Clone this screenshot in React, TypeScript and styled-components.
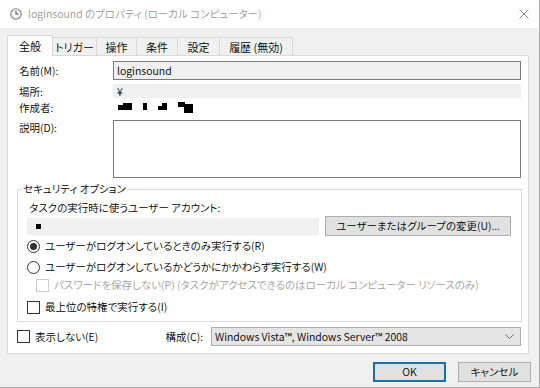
import styled, { createGlobalStyle } from 'styled-components'

const GlobalStyle = createGlobalStyle`
  html, body {
    margin: 0;
    padding: 0;
    background: #f0f0f0;
  }
  body {
    font-family: "Noto Sans CJK JP", "Noto Sans", sans-serif;
    font-size: 10.5px;
    font-weight: 350;
    color: #000;
    font-feature-settings: "palt";
  }
  * {
    box-sizing: border-box;
  }
`

const Window = styled.div`
  width: 540px;
  height: 388px;
  background: #f0f0f0;
  border-right: 1px solid #aaaaaa;
  border-bottom: 1px solid #aaaaaa;
  display: flex;
  flex-direction: column;
  overflow: hidden;
`

const TitleBar = styled.div`
  height: 28px;
  flex: none;
  background: #fff;
  display: flex;
  align-items: center;
  padding: 0 10px 0 10px;
`

const TitleText = styled.span`
  flex: 1;
  margin-left: 6px;
  color: #999;
  font-size: 10.5px;
  line-height: 16px;
  white-space: nowrap;
`

const Body = styled.div`
  flex: 1;
  display: flex;
  flex-direction: column;
  padding: 7px 8px 0 7px;
`

const TabStrip = styled.div`
  display: flex;
  align-items: flex-end;
  height: 20px;
  position: relative;
  z-index: 1;
`

const Tab = styled.div<{ $active?: boolean; $w: number }>`
  width: ${p => p.$w}px;
  height: ${p => (p.$active ? 21 : 18)}px;
  margin-bottom: ${p => (p.$active ? -1 : 0)}px;
  margin-left: -1px;
  display: flex;
  align-items: center;
  justify-content: center;
  border: 1px solid #d9d9d9;
  border-bottom: none;
  background: ${p => (p.$active ? '#fff' : '#f0f0f0')};
  font-size: 11px;
  line-height: 14px;
  white-space: nowrap;
  &:first-child {
    margin-left: 0;
  }
`

const Panel = styled.div`
  height: 299px;
  margin-right: 2px;
  background: #fff;
  border: 1px solid #d9d9d9;
  display: flex;
  flex-direction: column;
`

const Form = styled.div`
  display: flex;
  flex-direction: column;
  padding: 0 7px 0 11px;
`

const Row = styled.div<{ $top: number; $h: number; $alignTop?: boolean }>`
  display: grid;
  grid-template-columns: 94px 1fr;
  align-items: ${p => (p.$alignTop ? 'start' : 'center')};
  margin-top: ${p => p.$top}px;
  height: ${p => p.$h}px;
`

const Label = styled.span<{ $nudge?: number }>`
  margin-top: ${p => p.$nudge || 0}px;
  line-height: 13px;
  white-space: nowrap;
`

const TextBox = styled.div<{ $bg?: string; $border?: boolean }>`
  height: 100%;
  background: ${p => p.$bg || '#fff'};
  border: ${p => (p.$border ? '1px solid #7a7a7a' : 'none')};
  padding-left: ${p => (p.$border ? 3 : 4)}px;
  display: flex;
  align-items: center;
  line-height: 13px;
`

const Group = styled.fieldset`
  margin: 4px 6px 0 9px;
  padding: 0 10px 6px 9px;
  border: 1px solid #dcdcdc;
  min-width: 0;
  display: flex;
  flex-direction: column;
`

const Legend = styled.legend`
  margin-left: -5px;
  padding: 0 1px;
  line-height: 14px;
  white-space: nowrap;
`

const GroupText = styled.div`
  margin-top: 5px;
  line-height: 14px;
  padding-left: 2px;
  white-space: nowrap;
`

const AccountRow = styled.div`
  margin-top: 1px;
  height: 20px;
  display: flex;
  align-items: center;
  justify-content: space-between;
`

const AccountField = styled.div`
  width: 292px;
  height: 17px;
  background: #f0f0f0;
  display: flex;
  align-items: center;
  padding-left: 9px;
`

const Dot = styled.span`
  width: 5px;
  height: 5px;
  background: #000;
`

const Button = styled.div<{ $w: number; $default?: boolean }>`
  width: ${p => p.$w}px;
  height: 20px;
  background: #e1e1e1;
  border: 1px solid ${p => (p.$default ? '#1c6ea8' : '#adadad')};
  box-shadow: ${p => (p.$default ? 'inset 0 0 0 1px #1c6ea8' : 'none')};
  display: flex;
  align-items: center;
  justify-content: center;
  line-height: 14px;
  white-space: nowrap;
`

const Option = styled.div<{ $top: number; $indent?: number; $disabled?: boolean }>`
  margin-top: ${p => p.$top}px;
  margin-left: ${p => p.$indent || 0}px;
  height: 16px;
  display: flex;
  align-items: center;
  gap: 5px;
  color: ${p => (p.$disabled ? '#a0a0a0' : '#000')};
  line-height: 14px;
  white-space: nowrap;
`

const Radio = styled.span<{ $checked?: boolean }>`
  width: 13px;
  height: 13px;
  flex: none;
  border-radius: 50%;
  border: 1px solid #333;
  background: #fff;
  display: flex;
  align-items: center;
  justify-content: center;
  &::after {
    content: '';
    width: 7px;
    height: 7px;
    border-radius: 50%;
    background: ${p => (p.$checked ? '#333' : 'transparent')};
  }
`

const Check = styled.span<{ $disabled?: boolean }>`
  width: 13px;
  height: 13px;
  flex: none;
  border: 1px solid ${p => (p.$disabled ? '#cccccc' : '#333')};
  background: #fff;
`

const BottomRow = styled.div`
  margin-top: 5px;
  height: 19px;
  padding: 0 7px 0 9px;
  display: flex;
  align-items: center;
`

const CheckGroup = styled.div`
  flex: 1;
  display: flex;
  align-items: center;
  gap: 5px;
  line-height: 14px;
  white-space: nowrap;
`

const ComboLabel = styled.span`
  margin-right: 8px;
  line-height: 14px;
  white-space: nowrap;
`

const Combo = styled.div`
  width: 310px;
  height: 19px;
  background: #e5e5e5;
  border: 1px solid #adadad;
  display: flex;
  align-items: center;
  padding: 0 6px 0 3px;
  line-height: 14px;
  white-space: nowrap;
`

const ComboText = styled.span`
  flex: 1;
`

const Footer = styled.div`
  margin-top: 8px;
  display: flex;
  justify-content: flex-end;
  gap: 12px;
`

const ClockIcon = () => (
  <svg width="12" height="12" viewBox="0 0 12 12">
    <circle cx="6" cy="6" r="5.2" fill="#f4f4f4" stroke="#7d7d7d" strokeWidth="1.1" />
    <path d="M6 2.8V6H8.6" fill="none" stroke="#5a5a5a" strokeWidth="1.1" />
  </svg>
)

const CloseIcon = () => (
  <svg width="10" height="10" viewBox="0 0 10 10">
    <path d="M0.5 0.5L9.5 9.5M9.5 0.5L0.5 9.5" stroke="#8c8c8c" strokeWidth="1" />
  </svg>
)

const Chevron = () => (
  <svg width="9" height="5" viewBox="0 0 9 5">
    <path d="M0.5 0.5L4.5 4.5L8.5 0.5" fill="none" stroke="#707070" strokeWidth="1" />
  </svg>
)

// redacted author name
const Redacted = () => (
  <svg width="80" height="12" viewBox="0 0 80 12" style={{ marginLeft: 1 }}>
    <rect x="0" y="4" width="6" height="5" fill="#000" />
    <rect x="5" y="2" width="9" height="7" fill="#000" />
    <rect x="25" y="2" width="4" height="7" fill="#000" />
    <rect x="40" y="5" width="5" height="4" fill="#000" />
    <rect x="44" y="2" width="5" height="7" fill="#000" />
    <rect x="60" y="1" width="7" height="5" fill="#000" />
    <rect x="66" y="3" width="9" height="9" fill="#000" />
  </svg>
)

const tabs: [string, number][] = [
  ['全般', 46],
  ['トリガー', 45],
  ['操作', 41],
  ['条件', 42],
  ['設定', 43],
  ['履歴 (無効)', 74],
]

const App = () => {
  return (
    <>
      <GlobalStyle />
      <Window>
        <TitleBar>
          <ClockIcon />
          <TitleText>loginsound のプロパティ (ローカル コンピューター)</TitleText>
          <CloseIcon />
        </TitleBar>

        <Body>
          <TabStrip>
            {tabs.map(([t, w], i) => (
              <Tab key={t} $w={w} $active={i === 0}>{t}</Tab>
            ))}
          </TabStrip>

          <Panel>
            <Form>
              <Row $top={5} $h={19}>
                <Label>名前(M):</Label>
                <TextBox $bg="#f0f0f0" $border>loginsound</TextBox>
              </Row>
              <Row $top={4} $h={14}>
                <Label>場所:</Label>
                <TextBox $bg="#f0f0f0">¥</TextBox>
              </Row>
              <Row $top={2} $h={14}>
                <Label>作成者:</Label>
                <TextBox $bg="transparent"><Redacted /></TextBox>
              </Row>
              <Row $top={6} $h={58} $alignTop>
                <Label $nudge={1}>説明(D):</Label>
                <TextBox $border />
              </Row>
            </Form>

            <Group>
              <Legend>セキュリティ オプション</Legend>
              <GroupText>タスクの実行時に使うユーザー アカウント:</GroupText>
              <AccountRow>
                <AccountField><Dot /></AccountField>
                <Button $w={186}>ユーザーまたはグループの変更(U)...</Button>
              </AccountRow>
              <Option $top={2}>
                <Radio $checked />
                ユーザーがログオンしているときのみ実行する(R)
              </Option>
              <Option $top={5}>
                <Radio />
                ユーザーがログオンしているかどうかにかかわらず実行する(W)
              </Option>
              <Option $top={2} $indent={9} $disabled>
                <Check $disabled />
                パスワードを保存しない(P) (タスクがアクセスできるのはローカル コンピューター リソースのみ)
              </Option>
              <Option $top={6}>
                <Check />
                最上位の特権で実行する(I)
              </Option>
            </Group>

            <BottomRow>
              <CheckGroup>
                <Check />
                表示しない(E)
              </CheckGroup>
              <ComboLabel>構成(C):</ComboLabel>
              <Combo>
                <ComboText>Windows Vista™, Windows Server™ 2008</ComboText>
                <Chevron />
              </Combo>
            </BottomRow>
          </Panel>

          <Footer>
            <Button $w={73} $default>OK</Button>
            <Button $w={73}>キャンセル</Button>
          </Footer>
        </Body>
      </Window>
    </>
  )
}

export default App
